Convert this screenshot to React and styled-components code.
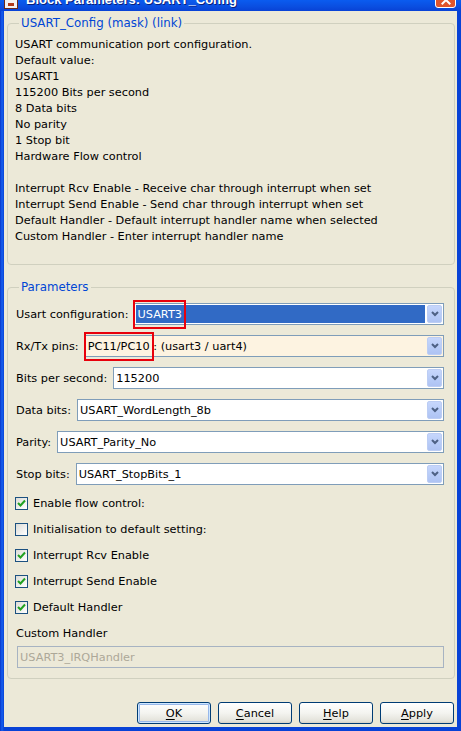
import styled, { createGlobalStyle, css } from "styled-components";

const GlobalStyle = createGlobalStyle`
  body {
    margin: 0;
    font-family: "DejaVu Sans", Verdana, sans-serif;
    font-size: 11.3px;
    color: #000;
  }
`;

const Window = styled.div`
  width: 461px;
  height: 731px;
  display: flex;
  flex-direction: column;
  background: #0842d6;
  overflow: hidden;
`;

const TitleBar = styled.div`
  height: 9px;
  flex: none;
  display: flex;
  align-items: flex-end;
  gap: 8px;
  overflow: hidden;
  padding: 0 5px 2px 4px;
  background: linear-gradient(#0a5cf0, #0a4ee0 60%, #0842d6);
`;

const TitleIcon = styled.div`
  width: 14px;
  height: 14px;
  flex: none;
  background: #f2f2f2;
  border: 1px solid #6b2a1c;
  box-sizing: border-box;
  position: relative;
  &::after {
    content: "";
    position: absolute;
    left: 3px;
    right: 3px;
    bottom: 2px;
    height: 3px;
    background: #b03a1a;
  }
`;

const TitleText = styled.div`
  flex: 1;
  color: #fff;
  font-family: "Liberation Sans", Arial, sans-serif;
  font-weight: bold;
  font-size: 13px;
  line-height: 13px;
  margin-bottom: 3px;
  text-shadow: 1px 1px #0a1f7a;
`;

const CloseButton = styled.div`
  width: 21px;
  height: 21px;
  flex: none;
  border-radius: 3px;
  border: 1px solid #fff;
  box-sizing: border-box;
  background: #e0552c;
  margin-bottom: 1px;
  position: relative;
  &::before,
  &::after {
    content: "";
    position: absolute;
    left: 9px;
    bottom: 1px;
    width: 2px;
    height: 12px;
    background: #fff;
    transform: rotate(45deg);
  }
  &::after {
    transform: rotate(-45deg);
  }
`;

const Frame = styled.div`
  flex: 1;
  display: flex;
  padding: 0 4px 4px 4px;
  background: linear-gradient(90deg, #0834c8, #1660f0 2px, #0842d6 4px);
`;

const Client = styled.div`
  flex: 1;
  display: flex;
  flex-direction: column;
  background: #ece9d8;
  padding: 0 2px 0 3px;
`;

const Group = styled.fieldset`
  margin: ${(p) => p.$top}px 0 0 0;
  padding: ${(p) => p.$pad};
  border: 1px solid #d0d0bf;
  border-radius: 4px;
  min-width: 0;
`;

const Legend = styled.legend`
  color: #0046d5;
  padding: 0 2px;
  margin-left: 4px;
  line-height: 14px;
  font-size: 11.8px;
`;

const Description = styled.div`
  line-height: 16px;
  white-space: pre;
`;

const Rows = styled.div`
  display: flex;
  flex-direction: column;
  gap: ${(p) => p.$gap}px;
  margin-top: ${(p) => p.$top || 0}px;
`;

const FieldRow = styled.div`
  display: flex;
  align-items: center;
  gap: 6px;
  height: 22px;
`;

const Label = styled.span`
  margin-left: 1px;
  white-space: nowrap;
`;

const Combo = styled.div`
  flex: 1;
  height: 22px;
  box-sizing: border-box;
  display: flex;
  align-items: stretch;
  border: 1px solid #7f9db9;
  background: ${(p) => p.$bg || "#fff"};
  min-width: 0;
`;

const ComboText = styled.div`
  flex: 1;
  display: flex;
  align-items: center;
  padding-left: 2px;
  white-space: pre;
  ${(p) =>
    p.$selected &&
    css`
      margin: 1px;
      padding-left: 1px;
      background: #316ac5;
      color: #fff;
    `}
`;

const Marked = styled.span`
  display: inline-block;
  border: 2px solid #e8000b;
  padding: 6px 2px;
  margin: -8px -4px;
  line-height: 13px;
`;

const ArrowButton = styled.div`
  width: 15px;
  flex: none;
  margin: 1px;
  border-radius: 2px;
  background: linear-gradient(#c6d6fc, #b7cbf7 60%, #aec3f3);
  border: 1px solid #bccdf4;
  box-sizing: border-box;
  display: flex;
  align-items: center;
  justify-content: center;
`;

const CheckRow = styled.div`
  display: flex;
  align-items: center;
  gap: 5px;
  height: 26px;
`;

const CheckBox = styled.span`
  width: 13px;
  height: 13px;
  flex: none;
  box-sizing: border-box;
  border: 1px solid #1c5180;
  background: linear-gradient(135deg, #dcdcd7, #fff);
  display: flex;
  align-items: center;
  justify-content: center;
`;

const FieldCaption = styled.div`
  height: 26px;
  display: flex;
  align-items: center;
  margin-left: 1px;
`;

const TextBox = styled.div`
  height: 22px;
  box-sizing: border-box;
  margin-left: 2px;
  border: 1px solid #a7b3c2;
  display: flex;
  align-items: center;
  padding-left: 2px;
  color: #aca899;
`;

const ButtonBar = styled.div`
  margin-top: auto;
  display: flex;
  justify-content: flex-end;
  gap: 7px;
  padding: 0 1px 3px 0;
`;

const Button = styled.button`
  width: 74px;
  height: 22px;
  box-sizing: border-box;
  font: inherit;
  color: #000;
  border: 1px solid #003c74;
  border-radius: 3px;
  background: linear-gradient(#fff, #f4f4f0 50%, #e3e2da 90%, #d6d0c5);
  padding: 0;
  ${(p) =>
    p.$default &&
    css`
      box-shadow: inset 0 0 0 1px #cee7ff, inset 0 0 0 2px #98b8ea;
    `}
  u {
    text-decoration-thickness: 1px;
    text-underline-offset: 2px;
  }
`;

const Chevron = () => (
  <svg width="8" height="6" viewBox="0 0 8 6">
    <path d="M1 1 L4 4 L7 1" fill="none" stroke="#4d6185" strokeWidth="2" />
  </svg>
);

const Check = () => (
  <svg width="9" height="9" viewBox="0 0 9 9">
    <path d="M1 4 L3.5 6.5 L8 1.5" fill="none" stroke="#21a121" strokeWidth="2" />
  </svg>
);

const description = `USART communication port configuration.
Default value:
USART1
115200 Bits per second
8 Data bits
No parity
1 Stop bit
Hardware Flow control

Interrupt Rcv Enable - Receive char through interrupt when set
Interrupt Send Enable - Send char through interrupt when set
Default Handler - Default interrupt handler name when selected
Custom Handler - Enter interrupt handler name`;

const selects = [
  { label: "Usart configuration:", value: "USART3", mark: true, selected: true },
  { label: "Rx/Tx pins:", value: "PC11/PC10", rest: " : (usart3 / uart4)", mark: true, bg: "#fdf3e1" },
  { label: "Bits per second:", value: "115200" },
  { label: "Data bits:", value: "USART_WordLength_8b" },
  { label: "Parity:", value: "USART_Parity_No" },
  { label: "Stop bits:", value: "USART_StopBits_1" },
];

const checks = [
  { label: "Enable flow control:", on: true },
  { label: "Initialisation to default setting:", on: false },
  { label: "Interrupt Rcv Enable", on: true },
  { label: "Interrupt Send Enable", on: true },
  { label: "Default Handler", on: true },
];

const buttons = [
  { key: "O", rest: "K", def: true },
  { key: "C", rest: "ancel" },
  { key: "H", rest: "elp" },
  { key: "A", rest: "pply" },
];

export default function App() {
  return (
    <>
      <GlobalStyle />
      <Window>
        <TitleBar>
          <TitleIcon />
          <TitleText>Block Parameters: USART_Config</TitleText>
          <CloseButton />
        </TitleBar>
        <Frame>
          <Client>
            <Group $top={5} $pad="7px 8px 19px 7px">
              <Legend>USART_Config (mask) (link)</Legend>
              <Description>{description}</Description>
            </Group>
            <Group $top={15} $pad="9px 10px 10px 7px">
              <Legend>Parameters</Legend>
              <Rows $gap={10}>
                {selects.map((s) => (
                  <FieldRow key={s.label}>
                    <Label>{s.label}</Label>
                    <Combo $bg={s.bg}>
                      <ComboText $selected={s.selected}>
                        {s.mark ? <Marked>{s.value}</Marked> : s.value}
                        {s.rest}
                      </ComboText>
                      <ArrowButton>
                        <Chevron />
                      </ArrowButton>
                    </Combo>
                  </FieldRow>
                ))}
              </Rows>
              <Rows $gap={0} $top={5}>
                {checks.map((c) => (
                  <CheckRow key={c.label}>
                    <CheckBox>{c.on && <Check />}</CheckBox>
                    <span>{c.label}</span>
                  </CheckRow>
                ))}
                <FieldCaption>Custom Handler</FieldCaption>
                <TextBox>USART3_IRQHandler</TextBox>
              </Rows>
            </Group>
            <ButtonBar>
              {buttons.map((b) => (
                <Button key={b.key} $default={b.def}>
                  <u>{b.key}</u>
                  {b.rest}
                </Button>
              ))}
            </ButtonBar>
          </Client>
        </Frame>
      </Window>
    </>
  );
}
